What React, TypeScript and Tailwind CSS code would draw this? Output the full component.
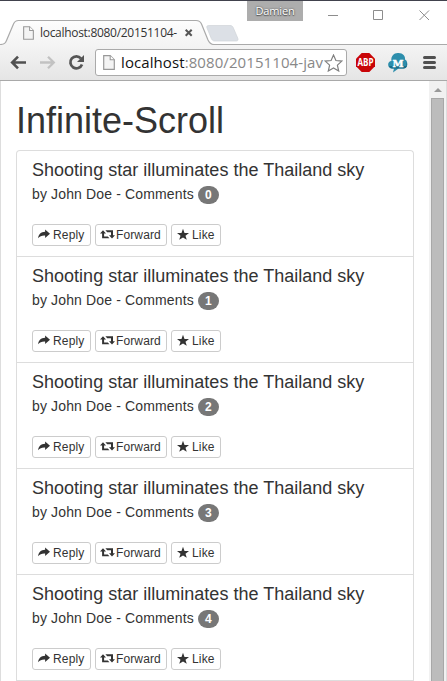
import React from "react";

const CHROME_FONT = "font-['Open_Sans','Noto_Sans',sans-serif]";

function PageIcon({ className }: { className?: string }) {
  return (
    <svg width="12" height="15" viewBox="0 0 12 15" className={className}>
      <path d="M.7 .7H7.2L11.3 4.8V14.3H.7Z" fill="#f4f4f4" stroke="#999" strokeWidth="1.2" />
      <path d="M7.2 .7V4.8H11.3" fill="#fff" stroke="#999" strokeWidth="1.1" />
    </svg>
  );
}

function TabStrip() {
  return (
    <div className="relative h-[45px] w-full shrink-0 border-t border-[#41424d] bg-white">
      <svg width="447" height="45" viewBox="0 0 447 45" className="absolute left-0 -top-px">
        <defs>
          <linearGradient id="tab" x1="0" y1="0" x2="0" y2="1">
            <stop offset="0" stopColor="#fdfdfd" />
            <stop offset="1" stopColor="#f4f4f4" />
          </linearGradient>
        </defs>
        <path d="M0 0H447V1H0Z" fill="#41424d" />
        <path d="M0 44.5C4.500 44.500 5.500 43 6.500 40.500L13.500 24C14.500 21.500 16 20.500 18.500 20.500H196C199 20.500 200.500 21.500 201.500 24L208 40C209.300 43 210.500 44.500 214 44.500V45H0Z" fill="url(#tab)" />
        <path d="M0 44.500C4.500 44.500 5.500 43 6.500 40.500L13.500 24C14.500 21.500 16 20.500 18.500 20.500H196C199 20.500 200.500 21.500 201.500 24L208 40C209.300 43 210.500 44.500 214 44.500H447" fill="none" stroke="#aaa" strokeWidth="1.2" />
        <path d="M209 25.500H230C231.500 25.500 232.500 26 233.200 27.500L237.700 38C238.500 40 238 41 236 41H214.500C213 41 212 40 211.300 38.500L207 28C206.300 26.300 207 25.500 209 25.500Z" fill="#dce0e6" stroke="#d0d4d9" strokeWidth=".7" />
        <path d="M185.700 29.700L191.700 35.700M191.700 29.700L185.700 35.700" stroke="#555" strokeWidth="2" />
        <path d="M328 15.500H338M373.500 10.500H382.500V19.500H373.500ZM419.500 10.500L429 20M429 10.500L419.500 20" fill="none" stroke="#8d8d8d" strokeWidth="1" />
      </svg>
      <div className="relative flex h-full items-start">
        <div className="mt-[22px] flex h-5 w-[178px] items-center pl-[23px]">
          <PageIcon className="h-[14px] w-[11px] shrink-0" />
          <span className={`ml-[6px] whitespace-nowrap text-[12px] leading-5 tracking-[-0.3px] text-[#333] ${CHROME_FONT}`}>
            localhost:8080/20151104-
          </span>
        </div>
        <div className={`ml-[69px] h-[20px] w-[56px] bg-[#adadad] text-center text-[11px] leading-[20px] tracking-[-0.15px] text-white [text-shadow:0_0_2px_#444,0_1px_1px_#555] ${CHROME_FONT}`}>
          Damien
        </div>
      </div>
    </div>
  );
}

function Toolbar() {
  return (
    <div className="flex h-9 shrink-0 items-center border-b border-[#a9a9a9] bg-linear-to-b from-[#f4f4f4] to-[#e5e5e5]">
      <svg width="95" height="35" viewBox="0 45 95 35" className="shrink-0" fill="none">
        <path d="M26 62.500H13M18 56.700L12.200 62.500L18 68.300" stroke="#505050" strokeWidth="2.600" />
        <path d="M40 62.500H53M48 56.700L53.800 62.500L48 68.300" stroke="#c2c2c2" strokeWidth="2.300" />
        <path d="M81 58.500A6 6 0 1 0 82 64.500" stroke="#555" strokeWidth="2.700" />
        <path d="M84 55V62H77Z" fill="#555" />
      </svg>
      <div className="flex h-[27px] w-[252px] shrink-0 items-center overflow-hidden rounded-[3px] border border-[#aaa] bg-white pl-[7px]">
        <PageIcon className="shrink-0" />
        <span className={`ml-[6px] w-[204px] shrink-0 whitespace-nowrap text-[15px] leading-[25px] tracking-[0.09px] text-[#888] ${CHROME_FONT}`}>
          <span className="text-[#111]">localhost</span>:8080/20151104-jav
        </span>
        <svg width="19" height="18" viewBox="0 0 19 18" className="-ml-px shrink-0">
          <path d="M9.500 1L11.900 6.500L17.800 7.100L13.400 11.100L14.700 17L9.500 14L4.300 17L5.600 11.100L1.200 7.100L7.100 6.500Z" fill="#fff" stroke="#808080" strokeWidth="1.200" />
        </svg>
      </div>
      <svg width="100" height="35" viewBox="347 45 100 35" className="shrink-0">
        <path d="M361.700 53H369.300L375 58.700V66.300L369.300 72H361.700L356 66.300V58.700Z" fill="#c90508" />
        <text x="365.500" y="66.200" textAnchor="middle" fontSize="10" fontWeight="700" fill="#fff" textLength="16" lengthAdjust="spacingAndGlyphs" fontFamily="Open Sans, sans-serif">ABP</text>
        <path d="M392 68.500C387 68.500 387 61 391.500 61C390.500 56 394.500 52.500 398.500 53C403 53 405.500 56 405 59.500C408.500 61 408 68.500 403.500 68.500H398.500L393 72.500L394 68.500Z" fill="#2d8eac" />
        <path d="M392 68.500H403.500C407 68.500 408 65 406.500 62V66H389C389.500 67.500 390.500 68.500 392 68.500Z" fill="#196d89" />
        <text x="398" y="66.500" textAnchor="middle" fontSize="10" fontWeight="700" fill="#fff" stroke="#fff" strokeWidth=".4" fontFamily="DejaVu Serif, serif">M</text>
        <path d="M424.500 57.500H434.500M424.500 62.500H434.500M424.500 67.500H434.500" stroke="#505050" strokeWidth="3" strokeLinecap="round" />
      </svg>
    </div>
  );
}

const icons: Record<string, React.ReactNode> = {
  Reply: <path d="M7.300 .3L12.300 4.700L7.300 9V6.600C4 6.400 2 7.300 .1 9.300C.6 5.200 3 3 7.300 2.800Z" />,
  Forward: <path d="M3 1.300L6 4.500H4.100V7.400H7.800L9.400 9.300H2.100V4.500H0L3 1.300ZM5.400 1.300H13V6.300H15L12 9.600L9 6.300H11V3.200H7.200Z" />,
  Like: <path d="M6.150 -.5L7.700 3.900L12.300 4L8.700 6.800L10 11L6.150 8.500L2.300 11L3.600 6.800L0 4L4.600 3.900Z" />,
};

function ActionButton({ label, className }: { label: string; className: string }) {
  const forward = label === "Forward";
  return (
    <button className={`flex h-[22px] items-center rounded-[3px] border border-[#ccc] bg-white text-[12px] leading-[18px] text-[#333] ${className}`}>
      <svg width={forward ? 15 : 12} height="11" viewBox={forward ? "0 0 15 11" : "0 0 12.300 11"} fill="#333" className="-mt-px shrink-0 overflow-visible">
        {icons[label]}
      </svg>
      <span className={forward ? "ml-px tracking-[0.12px]" : "ml-[3px] tracking-[0.15px]"}>{label}</span>
    </button>
  );
}

function Story({ count }: { count: number }) {
  return (
    <li className="h-[106px] border-b border-[#ddd] px-[15px] pt-[9px]">
      <h4 className="whitespace-nowrap text-[18px] leading-[20px] tracking-[0.012px]">Shooting star illuminates the Thailand sky</h4>
      <p className="mt-[4px] flex h-5 items-center text-[14px] leading-5 tracking-[0.14px]">
        by John Doe - Comments
        <span className="ml-1 mt-[2px] h-[18px] min-w-[21px] rounded-[10px] bg-[#777] px-[7px] text-center text-[12px] font-bold leading-[18px] tracking-normal text-white">
          {count}
        </span>
      </p>
      <div className="mt-[20px] flex gap-1">
        <ActionButton label="Reply" className="w-[59px] pl-[5px]" />
        <ActionButton label="Forward" className="w-[72px] pl-[4px]" />
        <ActionButton label="Like" className="w-[50px] pl-[5px]" />
      </div>
    </li>
  );
}

export default function App() {
  return (
    <div className="flex h-[681px] w-[447px] flex-col overflow-hidden bg-white font-['Liberation_Sans',Arial,sans-serif] text-[#333]">
      <TabStrip />
      <Toolbar />
      <div className="flex h-[600px] border-l border-[#ddd]">
        <main className="w-[428px] shrink-0 pl-[15px]">
          <h1 className="pt-5 text-[36px] leading-[39px]">Infinite-Scroll</h1>
          <ul className="mt-[10px] w-[398px] rounded-t border-x border-t border-[#ddd]">
            {[0, 1, 2, 3, 4].map((n) => (
              <Story key={n} count={n} />
            ))}
          </ul>
        </main>
        <div className="flex w-[17px] shrink-0 flex-col items-center bg-[#f1f1f1]">
          <div className="flex h-[17px] items-center">
            <svg width="8" height="4" viewBox="0 0 8 4" className="mt-px">
              <path d="M4 0L8 4H0Z" fill="#999" />
            </svg>
          </div>
          <div className="w-[13px] flex-1 border border-b-0 border-[#a8a8a8] bg-[#bcbcbc]" />
        </div>
        <div className="w-px bg-[#ddd]" />
      </div>
    </div>
  );
}
